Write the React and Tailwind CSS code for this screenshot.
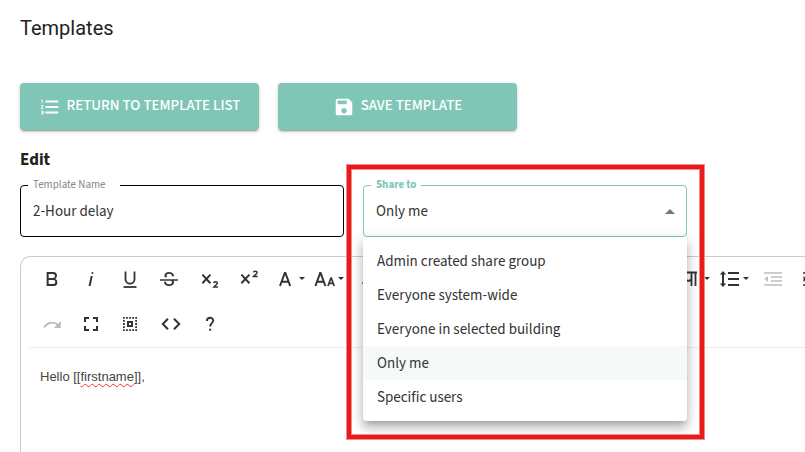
import React, { useState } from "react";
import { MdFormatListNumbered, MdSave } from "react-icons/md";

const shareOptions = [
  "Admin created share group",
  "Everyone system-wide",
  "Everyone in selected building",
  "Only me",
  "Specific users",
];

const Icon = ({ children }) => (
  <svg
    viewBox="0 0 24 24"
    className="h-6 w-6 shrink-0"
    fill="currentColor"
    aria-hidden="true"
  >
    {children}
  </svg>
);

const Stroke = ({ d, width = 1.8 }) => (
  <path d={d} fill="none" stroke="currentColor" strokeWidth={width} />
);

const icons = {
  bold: (
    <path d="M15.25,11.8h0A3.68,3.68,0,0,0,17,9a3.93,3.93,0,0,0-3.86-4H6.65V19h7a3.74,3.74,0,0,0,3.7-3.78V15.1A3.64,3.64,0,0,0,15.25,11.8ZM8.65,7h4.2a2.09,2.09,0,0,1,2,1.3,2.09,2.09,0,0,1-1.37,2.61,2.23,2.23,0,0,1-.63.09H8.65Zm4.6,10H8.65V13h4.6a2.09,2.09,0,0,1,2,1.3,2.09,2.09,0,0,1-1.37,2.61A2.23,2.23,0,0,1,13.25,17Z" />
  ),
  italic: (
    <path d="M11.76,9h2l-2.2,10h-2Zm1.68-4a1,1,0,1,0,1,1,1,1,0,0,0-1-1Z" />
  ),
  underline: (
    <>
      <Stroke d="M7.5 4.5v7.7a4.5 4.5 0 0 0 9 0V4.5" />
      <Stroke d="M5.5 20h13" />
    </>
  ),
  strike: (
    <path d="M3,12.2H21v1.5H16.63a3.6,3.6,0,0,1,.35,1.59,3.25,3.25,0,0,1-1.31,2.7A5.55,5.55,0,0,1,12.2,19a6.44,6.44,0,0,1-2.62-.54,4.46,4.46,0,0,1-1.9-1.49,3.67,3.67,0,0,1-.67-2.15V14.7H9.02v.11a2.18,2.18,0,0,0,.85,1.83,3.69,3.69,0,0,0,2.33.68,3.39,3.39,0,0,0,2.08-.55,1.73,1.73,0,0,0,.7-1.46,1.7,1.7,0,0,0-.65-1.44,3,3,0,0,0-.27-.17H3ZM16.34,7.06A4.18,4.18,0,0,0,14.62,5.55,5.63,5.63,0,0,0,12.11,5,5.16,5.16,0,0,0,8.75,6.06,3.36,3.36,0,0,0,7.44,8.77a3.23,3.23,0,0,0,.32,1.43h2.6c-.08-.06-.19-.11-.25-.16a1.61,1.61,0,0,1-.66-1.3,1.8,1.8,0,0,1,.69-1.51,3.13,3.13,0,0,1,1.97-.56,3.05,3.05,0,0,1,2.11.67,2.35,2.35,0,0,1,.73,1.83v.12h2V9.17A3.9,3.9,0,0,0,16.34,7.06Z" />
  ),
  subscript: (
    <>
      <Stroke d="M4.4 7.6l8 8.6M12.4 7.6l-8 8.6" width={2} />
      <Stroke
        d="M15.6 16c.3-1.7 3.7-1.7 3.7.2 0 1.4-2.5 2.4-3.6 3.9h4.2"
        width={1.5}
      />
    </>
  ),
  superscript: (
    <>
      <Stroke d="M4.4 7.6l8 8.6M12.4 7.6l-8 8.6" width={2} />
      <Stroke
        d="M16.4 5.4c.3-1.7 3.7-1.7 3.7.2 0 1.4-2.5 2.4-3.6 3.9h4.2"
        width={1.5}
      />
    </>
  ),
  fontFamily: <Stroke d="M6 19l4.8-13h.6L16.2 19M7.7 14.8h6.8" width={2} />,
  fontSize: (
    <>
      <Stroke d="M2.4 19L7.2 6h.4l4.8 13M4.2 14.8h6.6" width={2} />
      <Stroke d="M15 19l2.9-8h.4l2.9 8M16.2 16.4h4" width={1.7} />
    </>
  ),
  textColor: <Stroke d="M7 17l5-12h.6l5 12M9 13h6.6" width={2} />,
  paragraph: (
    <Stroke
      d="M4 5.5h14M12.500 5.500v13.500M16.500 5.500v13.500M6.500 5.500v6c0 3 6 3 6 0"
      width={1.8}
    />
  ),
  lineHeight: (
    <>
      <path d="M5 4l3.200 3.600H6v8.800h2.200L5 20l-3.200-3.600H4V7.600H1.800z" />
      <Stroke d="M10 6h11M10 12h11M10 18h11" width={2} />
    </>
  ),
  outdent: (
    <>
      <Stroke d="M3 6h18M10 10h11M10 14h11M3 18h18" width={1.7} />
      <path d="M7 9v6l-3.500-3z" />
    </>
  ),
  indent: (
    <>
      <Stroke d="M3 6h18M10 10h11M10 14h11M3 18h18" width={1.7} />
      <path d="M3.500 9v6l3.500-3z" />
    </>
  ),
  redo: (
    <>
      <Stroke d="M4 15.600c3.500-5.600 10-6.600 15-2.200" width={1.8} />
      <path d="M20.800 9v7h-7z" />
    </>
  ),
  fullscreen: (
    <path d="M7 14H5v5h5v-2H7v-3zm-2-4h2V7h3V5H5v5zm12 7h-3v2h5v-5h-2v3zM14 5v2h3v3h2V5h-5z" />
  ),
  selectAll: (
    <>
      <path
        d="M5.900 5v14M18.100 5v14M5 5.900h14M5 18.100h14"
        fill="none"
        stroke="currentColor"
        strokeWidth="1.800"
        strokeDasharray="1.800 1.250"
      />
      <path
        d="M10 10h4v4h-4z"
        fill="none"
        stroke="currentColor"
        strokeWidth="2"
      />
    </>
  ),
  code: (
    <Stroke
      d="M9 6.800L3.800 12 9 17.200M15 6.800l5.200 5.200-5.200 5.200"
      width={2}
    />
  ),
  help: (
    <>
      <Stroke
        d="M9 9c0-4.300 6.200-4.100 6.200-.4 0 2.500-3 2.800-3 6"
        width={1.9}
      />
      <path d="M11.200 16.700h2v2h-2z" />
    </>
  ),
};

const toolbarGroups = [
  [
    { name: "Bold", icon: "bold" },
    { name: "Italic", icon: "italic" },
    { name: "Underline", icon: "underline" },
    { name: "Strikethrough", icon: "strike" },
  ],
  [
    { name: "Subscript", icon: "subscript" },
    { name: "Superscript", icon: "superscript" },
  ],
  [
    { name: "Font Family", icon: "fontFamily", menu: true },
    { name: "Font Size", icon: "fontSize", menu: true },
    { name: "Text Color", icon: "textColor" },
  ],
];

const paragraphGroup = [
  { name: "Paragraph Format", icon: "paragraph", menu: true },
  { name: "Line Height", icon: "lineHeight", menu: true },
  { name: "Decrease Indent", icon: "outdent", disabled: true },
  { name: "Increase Indent", icon: "indent" },
];

const viewGroups = [
  [
    { name: "Redo", icon: "redo", disabled: true },
    { name: "Fullscreen", icon: "fullscreen" },
    { name: "Select All", icon: "selectAll" },
  ],
  [
    { name: "Code View", icon: "code" },
    { name: "Help", icon: "help" },
  ],
];

const ToolbarButton = ({ tool }) => (
  <button
    type="button"
    aria-label={tool.name}
    disabled={tool.disabled}
    className="flex h-[45px] w-[39px] shrink-0 items-center justify-center gap-px pb-0.5 text-[#333] disabled:text-[#bdbdbd]"
  >
    <Icon>{icons[tool.icon]}</Icon>
    {tool.menu && (
      <svg
        viewBox="0 0 6 3"
        className="h-[3px] w-1.5 shrink-0"
        aria-hidden="true"
      >
        <path d="M0 0h6L3 3z" fill="currentColor" />
      </svg>
    )}
  </button>
);

const ToolbarGroup = ({ tools }) => (
  <div className="flex shrink-0">
    {tools.map((tool) => (
      <ToolbarButton key={tool.name} tool={tool} />
    ))}
  </div>
);

const ActionButton = ({ icon: ButtonIcon, children }) => (
  <button
    type="button"
    className="flex h-[47px] w-[239px] items-center justify-center gap-1.5 rounded bg-[#80c6b6] text-[15px] font-medium text-white uppercase shadow-[0_3px_1px_-2px_rgba(0,0,0,0.2),0_2px_2px_0_rgba(0,0,0,0.14),0_1px_5px_0_rgba(0,0,0,0.12)]"
  >
    <ButtonIcon className="h-[22px] w-[22px]" />
    {children}
  </button>
);

const ShareSelect = () => {
  const [shareTo, setShareTo] = useState("Only me");
  const [open, setOpen] = useState(true);

  return (
    <div className="relative w-[324px]">
      <label
        htmlFor="share-to"
        className="absolute -top-2 left-2 bg-white px-[5px] text-[11px] leading-4 font-bold text-[#80c6b6]"
      >
        Share to
      </label>
      <select
        id="share-to"
        value={shareTo}
        onChange={(e) => setShareTo(e.target.value)}
        className="block h-[52px] w-full appearance-none rounded border border-[#80c6b6] bg-white px-3 pt-0.5 text-[15px] text-[#333] outline-none"
      >
        {shareOptions.map((option) => (
          <option key={option}>{option}</option>
        ))}
      </select>
      <svg
        viewBox="0 0 10 5"
        className="pointer-events-none absolute top-6 right-3 h-[5px] w-2.5"
        aria-hidden="true"
      >
        <path d="M0 5h10L5 0z" fill="#757575" />
      </svg>
      {open && (
        <ul
          role="listbox"
          aria-label="Share to"
          className="absolute inset-x-0 top-full z-10 rounded-b bg-white py-[7px] shadow-[0_5px_5px_-3px_rgba(0,0,0,0.2),0_8px_10px_1px_rgba(0,0,0,0.14),0_3px_14px_2px_rgba(0,0,0,0.12)]"
        >
          {shareOptions.map((option) => (
            <li
              key={option}
              role="option"
              aria-selected={option === shareTo}
              onClick={() => {
                setShareTo(option);
                setOpen(false);
              }}
              className="flex h-[34px] cursor-pointer items-center px-3.5 pt-0.5 text-[15px] text-[#333] aria-selected:bg-[#f5faf9]"
            >
              {option}
            </li>
          ))}
        </ul>
      )}
      <div className="pointer-events-none absolute -top-5 -right-[17px] -bottom-[202px] -left-4 z-20 border-4 border-[#e81a1c] shadow-[0_0_0_1px_#f38b8c,inset_0_0_0_1px_#f38b8c]" />
    </div>
  );
};

const TemplateEditor = () => (
  <section className="mt-[19px] flex flex-1 flex-col rounded-tl-[10px] border-t border-l border-[#ccc]">
    <div className="ml-2 overflow-hidden border-b border-[#ebebeb] pl-[3px]">
      <div className="flex gap-0.5">
        {toolbarGroups.map((tools) => (
          <ToolbarGroup key={tools[0].name} tools={tools} />
        ))}
        <div className="w-[284px] shrink-0" />
        <ToolbarGroup tools={paragraphGroup} />
      </div>
      <div className="flex gap-0.5">
        {viewGroups.map((tools) => (
          <ToolbarGroup key={tools[0].name} tools={tools} />
        ))}
      </div>
    </div>
    <div
      contentEditable
      suppressContentEditableWarning
      role="textbox"
      aria-label="Template body"
      spellCheck={false}
      className="flex-1 px-[19px] py-5 font-['Liberation_Sans',Arial,sans-serif] text-[13px] leading-[18px] text-[#444] outline-none"
    >
      Hello [[
      <span className="underline decoration-red-500 decoration-wavy decoration-1 underline-offset-2">
        firstname
      </span>
      ]],
    </div>
  </section>
);

const App = () => {
  const [templateName, setTemplateName] = useState("2-Hour delay");

  return (
    <main className="flex min-h-screen flex-col overflow-hidden bg-white pl-5 font-['Source_Sans_3','Noto_Sans_CJK_SC',sans-serif] text-[#222]">
      <h1 className="mt-3.5 font-[Roboto,sans-serif] text-xl leading-7">
        Templates
      </h1>
      <div className="mt-[41px] flex gap-[19px]">
        <ActionButton icon={MdFormatListNumbered}>
          Return to template list
        </ActionButton>
        <ActionButton icon={MdSave}>Save template</ActionButton>
      </div>
      <h2 className="mt-[18px] text-[17px] leading-6 font-bold">Edit</h2>
      <div className="mt-[13px] flex gap-[19px]">
        <div className="relative w-[324px]">
          <label
            htmlFor="template-name"
            className="absolute -top-2 left-2 bg-white pr-3.5 pl-[5px] text-[11px] leading-4 text-[#888]"
          >
            Template Name
          </label>
          <input
            id="template-name"
            type="text"
            value={templateName}
            onChange={(e) => setTemplateName(e.target.value)}
            className="block h-[52px] w-full rounded border border-black px-3 text-[15px] text-[#333] outline-none"
          />
        </div>
        <ShareSelect />
      </div>
      <TemplateEditor />
    </main>
  );
};

export default App;
